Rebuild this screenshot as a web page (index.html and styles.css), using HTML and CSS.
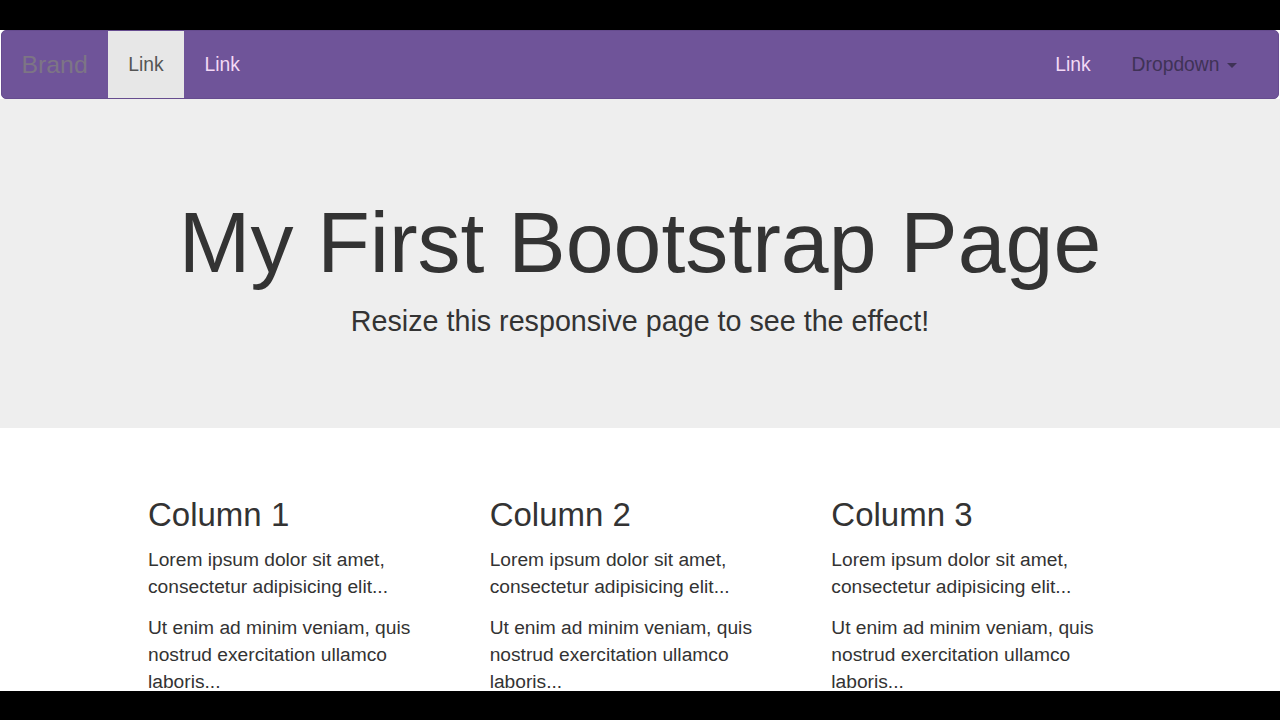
FILE: index.html
```html
<!DOCTYPE html>
<html lang="en">
<head>
<meta charset="utf-8">
<title>My First Bootstrap Page</title>
<link rel="stylesheet" href="styles.css">
</head>
<body>
<div class="letterbox-top"></div>
<nav class="navbar">
  <div class="nav-left">
    <a class="brand" href="#">Brand</a>
    <a class="nav-link active" href="#">Link</a>
    <a class="nav-link" href="#">Link</a>
  </div>
  <div class="nav-right">
    <a class="nav-link" href="#">Link</a>
    <a class="nav-link dropdown" href="#">Dropdown <span class="caret"></span></a>
  </div>
</nav>
<header class="jumbotron">
  <h1 class="jumbo-title">My First Bootstrap Page</h1>
  <p class="jumbo-lead">Resize this responsive page to see the effect!</p>
</header>
<main class="container">
  <section class="col">
    <h3 class="col-title">Column 1</h3>
    <p class="col-text">Lorem ipsum dolor sit amet, consectetur adipisicing elit...</p>
    <p class="col-text">Ut enim ad minim veniam, quis nostrud exercitation ullamco laboris...</p>
  </section>
  <section class="col">
    <h3 class="col-title">Column 2</h3>
    <p class="col-text">Lorem ipsum dolor sit amet, consectetur adipisicing elit...</p>
    <p class="col-text">Ut enim ad minim veniam, quis nostrud exercitation ullamco laboris...</p>
  </section>
  <section class="col">
    <h3 class="col-title">Column 3</h3>
    <p class="col-text">Lorem ipsum dolor sit amet, consectetur adipisicing elit...</p>
    <p class="col-text">Ut enim ad minim veniam, quis nostrud exercitation ullamco laboris...</p>
  </section>
</main>
<div class="letterbox-bottom"></div>
</body>
</html>
```
FILE: styles.css
```css
* { box-sizing: border-box; }
html, body { margin: 0; padding: 0; }
body {
  background: #fff;
  font-family: "Liberation Sans", Arial, sans-serif;
  color: #333;
  overflow: hidden;
  height: 720px;
}
.letterbox-top { height: 30px; background: #000; }
.letterbox-bottom {
  position: fixed; left: 0; right: 0; bottom: 0;
  height: 29px; background: #000;
}
.navbar {
  margin: 0 1px;
  height: 69px;
  background: #6f5499;
  border: 1px solid #664c8f;
  border-radius: 5px;
  display: flex;
  justify-content: space-between;
  align-items: stretch;
}
.nav-left, .nav-right { display: flex; align-items: stretch; }
.nav-right { padding-right: 21px; }
.brand {
  display: flex; align-items: center;
  padding: 0 20px 0 19.5px;
  font-size: 24.8px;
  color: #7d7585;
  text-decoration: none;
}
.nav-link {
  display: flex; align-items: center;
  padding: 0 20.5px;
  font-size: 19.3px;
  color: #f3d9f5;
  text-decoration: none;
}
.nav-link.active { background: #e7e7e7; color: #555; }
.nav-link.dropdown { color: #3f3256; }
.caret {
  display: inline-block;
  width: 0; height: 0;
  margin-left: 7px;
  margin-top: 2px;
  border-top: 5.5px solid #3f3256;
  border-left: 5.5px solid transparent;
  border-right: 5.5px solid transparent;
}
.jumbotron {
  background: #eee;
  text-align: center;
  padding: 95px 0 86px;
}
.jumbo-title {
  margin: 0 0 11px;
  font-size: 86px;
  line-height: 96px;
  font-weight: 400;
  color: #333;
}
.jumbo-lead {
  margin: 0;
  font-size: 28.7px;
  line-height: 41px;
  color: #333;
}
.container {
  width: 1025px;
  margin: 69px auto 0;
  display: grid;
  grid-template-columns: repeat(3, 1fr);
}
.col { padding: 0 20.5px; }
.col-title {
  margin: 0 0 13px;
  font-size: 33px;
  line-height: 36px;
  font-weight: 400;
  color: #333;
}
.col-text {
  margin: 0 0 14px;
  font-size: 19.2px;
  line-height: 27px;
  color: #333;
}
```
